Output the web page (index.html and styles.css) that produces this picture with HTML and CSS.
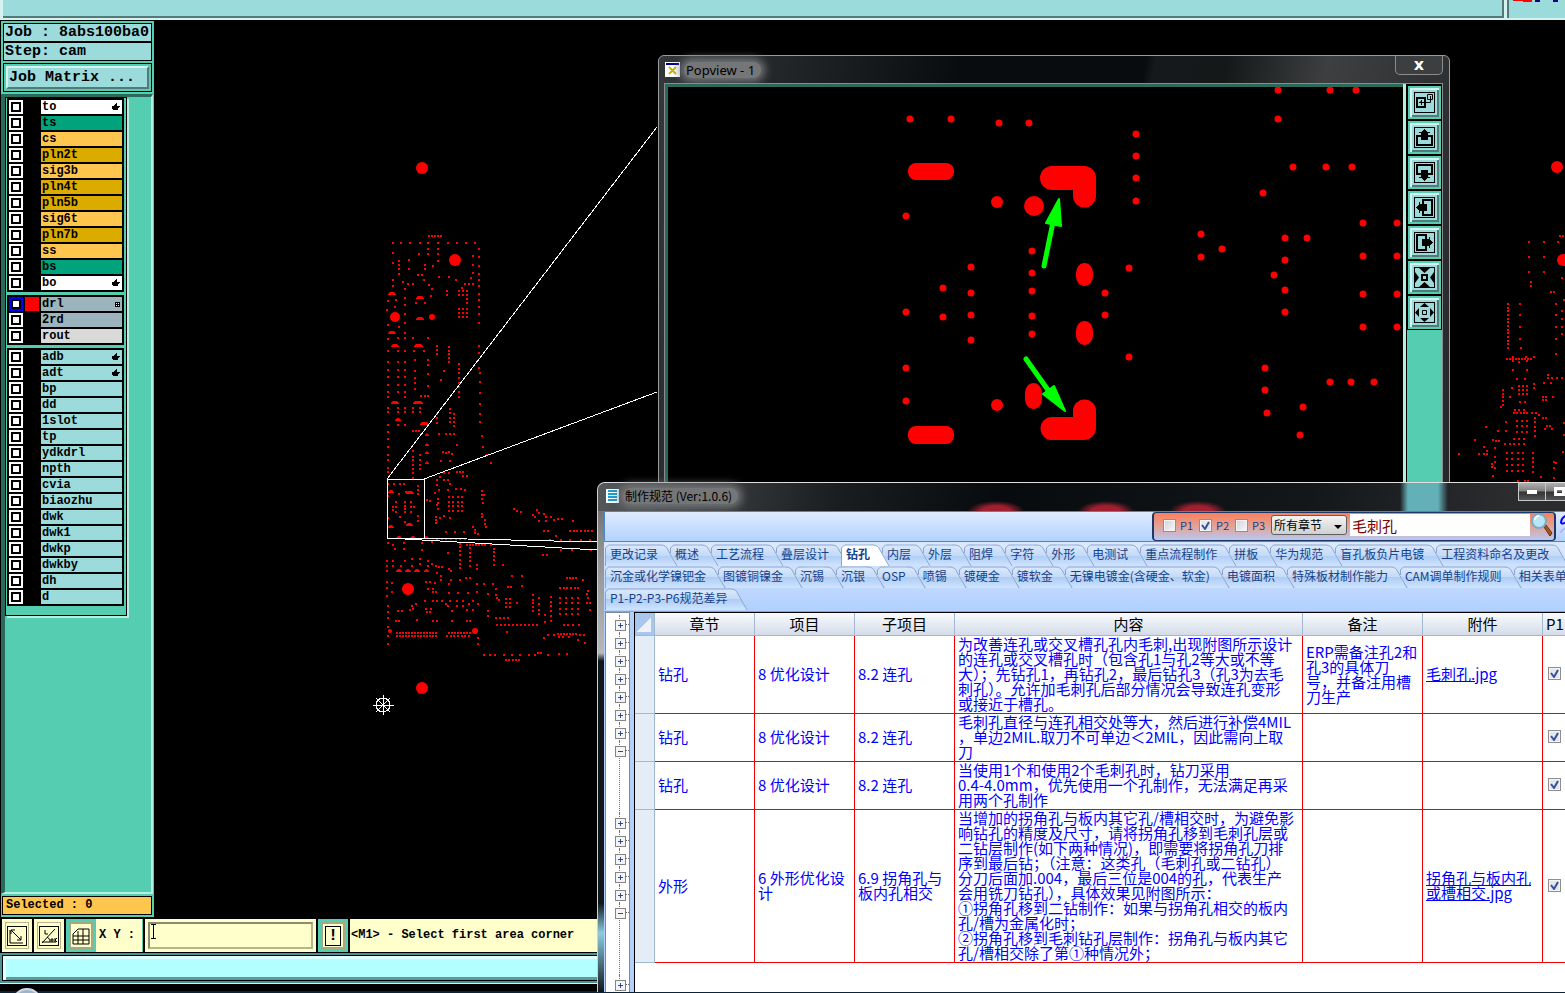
FILE: index.html
```html
<!DOCTYPE html>
<html lang="zh-CN">
<head>
  <meta charset="UTF-8" />
  <meta name="viewport" content="width=device-width, initial-scale=1.0"/>
  <title>制作规范 (Ver:1.0.6)</title>
  <link rel="stylesheet" href="styles.css">
</head>
<body>

  <!-- Shared icon shapes -->
  <svg width="0" height="0" class="defs" aria-hidden="true">
    <symbol id="frame" viewBox="0 0 21 21">
      <rect x=".5" y=".5" width="20" height="20" fill="none" stroke="#000"/>
    </symbol>
    <symbol id="pan" viewBox="0 0 21 21">
      <path d="M7 9H3v9h15V9h-4" fill="none" stroke="#000" stroke-width="2"/>
      <path d="M10 2h1v1h1v1h1v1h3v1h-2v7H7V6H5V5h3V4h1V3h1z"/>
    </symbol>
    <symbol id="hand" viewBox="0 0 8 8">
      <path d="M0 3h2V2h1V1h1V0h1v3h3v1H7v1H6v2H1V6H0z"/>
    </symbol>
    <symbol id="lens" viewBox="0 0 22 24">
      <path d="M13 14l2-2 6 8-2 3z" fill="#a8571c" stroke="#5c3010"/>
      <circle cx="8" cy="8" r="7" fill="#b9e6f7" stroke="#7fa9bd" stroke-width="2"/>
      <path d="M4 7a4 4 0 0 1 4-4" fill="none" stroke="#fff" stroke-width="2"/>
    </symbol>
  </svg>

  <header class="topbar">
    <div class="top-pane main"></div>
    <div class="top-pane logo">
      <svg width="60" height="8"><path d="M4 0h19v2H14V1H4z" fill="#f00"/><path d="M26 0h5v2h-5zM44 0h5v2h-5z" fill="#000080"/></svg>
    </div>
  </header>

  <main class="workspace">
    <aside class="sidebar">
      <div class="job-line">Job : 8abs100ba0</div>
      <div class="job-line">Step: cam</div>
      <div class="matrix"><button type="button">Job Matrix ...</button></div>
      <div class="layer-area">
        <div class="layer-panel" id="layers"></div>
      </div>
      <div class="selected">Selected : 0</div>
    </aside>
    <svg class="board" role="img" aria-label="drill layer">
      <g transform="translate(-155 -20)">
        <path id="boardDots" fill="#f00" shape-rendering="crispEdges"/>
        <g fill="#f00">
          <circle cx="422" cy="168" r="6"/><circle cx="455" cy="260" r="6"/>
          <circle cx="395" cy="317" r="5"/><circle cx="432" cy="317" r="3"/>
          <circle cx="408" cy="589" r="6"/><circle cx="422" cy="688" r="6"/>
          <circle cx="390" cy="631" r="2"/><circle cx="475" cy="631" r="3"/>
          <circle cx="1557" cy="167" r="6"/><circle cx="1563" cy="260" r="6"/>
        </g>
        <path id="boardSlots" fill="#f00"/>
        <g fill="none" stroke="#fff" shape-rendering="crispEdges">
          <path d="M387 479h37v59h-37zM387 479L657 127M424 479L657 392M387 538L597 550M424 538L597 542"/>
          <path d="M373 705h21M383 695v20M376 698l14 14M390 698l-14 14"/>
          <circle cx="383" cy="705" r="7"/>
        </g>
      </g>
    </svg>
  </main>

  <section class="statusbar">
    <button type="button" class="tool" aria-label="Zoom area">
      <svg width="20" height="20"><use href="#frame" width="20" height="20"/><path d="M3 4v13h13M4 4l10 10M4 8V4h4M14 10v4h-4" fill="none" stroke="#000"/></svg>
    </button>
    <button type="button" class="tool" aria-label="Angle">
      <svg width="20" height="20"><use href="#frame" width="20" height="20"/><path d="M3 17L16 3M3 16h14M6 4v4h3M8 11c2 1 3 3 3 5M12 13h2v2h-2zM16 12v4M18 12l-2 2 2 2" fill="none" stroke="#000"/></svg>
    </button>
    <button type="button" class="tool on" aria-label="Grid">
      <svg width="18" height="18"><path d="M1 17V7l5-5h11v15zM1 9h16M11 2v15M6 4v13M1 13h16" fill="none" stroke="#000"/></svg>
    </button>
    <label class="xy" for="xy">X Y :</label>
    <div class="xy-box"><input id="xy" type="text" autocomplete="off"/><i class="ibeam"></i></div>
    <button type="button" class="tool on alert" aria-label="Alert"><b>!</b></button>
    <p class="message">&lt;M1&gt; - Select first area corner</p>
  </section>
  <section class="msgbar"><div></div></section>
  <footer class="taskbar"><span class="orb"></span></footer>

  <!-- Popview window -->
  <section class="popview">
    <div class="pop-title">
      <svg width="15" height="15"><path d="M0 0h15v15H0z" fill="#fff"/><path d="M1 1h13v2H1z" fill="#000090"/><path d="M4 5l7 7M11 5l-7 7" stroke="#c8b800" stroke-width="2"/></svg>
      <span class="glow">Popview - 1</span>
      <button type="button" class="pop-close" aria-label="Close">x</button>
    </div>
    <div class="pop-body">
      <svg class="pop-canvas" role="img" aria-label="zoomed area">
        <g transform="translate(-668 -87)">
          <g id="popDots" fill="#f00"></g>
          <g fill="#f00">
            <rect x="908" y="163" width="46" height="17" rx="8"/>
            <rect x="908" y="426" width="46" height="18" rx="8"/>
            <path d="M1052 166h32a12 12 0 0 1 12 12v18a11 11 0 0 1-23 0v-6h-21a12 12 0 0 1 0-24z"/>
            <path d="M1052 417h21v-6a11 11 0 0 1 23 0v17a12 12 0 0 1-12 12h-32a11 11 0 0 1 0-23z"/>
            <circle cx="997" cy="202" r="6"/><circle cx="1034" cy="206" r="10"/>
            <circle cx="997" cy="405" r="6"/>
            <rect x="1025" y="383" width="17" height="26" rx="8" ry="10"/>
            <rect x="1076" y="263" width="17" height="23" rx="8" ry="10"/>
            <rect x="1076" y="321" width="17" height="24" rx="8" ry="10"/>
          </g>
          <g stroke="#0f0" fill="#0f0" stroke-linecap="round" stroke-linejoin="round">
            <path d="M1044 266l9-44M1026 359l22 31" stroke-width="5"/>
            <path d="M1059 199l-13 24 15 3zM1065 411l-22-17 11-8z" stroke-width="2"/>
          </g>
        </g>
      </svg>
      <div class="pop-tools">
        <button type="button" aria-label="Area"><svg width="21" height="21"><use href="#frame"/><path d="M3 6h8v9H3z" fill="none" stroke="#000" stroke-width="2"/><path d="M13.500 2.500h5v5h-5zM16.500 4v6.500H5M7.500 8v5M6 10h1" fill="none" stroke="#000"/></svg></button>
        <button type="button" aria-label="Up"><svg width="21" height="21"><use href="#frame"/><use href="#pan"/></svg></button>
        <button type="button" aria-label="Down"><svg width="21" height="21"><use href="#frame"/><use href="#pan" transform="rotate(180 10.500 10.500)"/></svg></button>
        <button type="button" aria-label="Left"><svg width="21" height="21"><use href="#frame"/><use href="#pan" transform="rotate(-90 10.500 10.500)"/></svg></button>
        <button type="button" aria-label="Right"><svg width="21" height="21"><use href="#frame"/><use href="#pan" transform="rotate(90 10.500 10.500)"/></svg></button>
        <button type="button" aria-label="Zoom in"><svg width="21" height="21"><use href="#frame"/><path d="M8 8h5v5H8z" fill="none" stroke="#000" stroke-width="2"/><path d="M5 1h11l-5.500 5zM5 20h11l-5.500-5zM1 5v11l4-5.500zM20 5v11l-4-5.500z"/></svg></button>
        <button type="button" aria-label="Zoom out"><svg width="21" height="21"><use href="#frame"/><path d="M8.500 8.500h4v4h-4z" fill="none" stroke="#000"/><path d="M6 5h9l-4.500-4zM6 16h9l-4.500 4zM5 6v9l-4-4.500zM16 6v9l4-4.500z"/></svg></button>
      </div>
    </div>
  </section>

  <!-- Specification window -->
  <section class="spec">
    <div class="spec-title">
      <svg width="13" height="14"><path d="M0 0h13v14H0z" fill="#fff"/><path d="M2 2h9M2 5h9M2 8h9M2 11h9" stroke="#1c9fd0" stroke-width="2"/></svg>
      <span class="glow">制作规范 (Ver:1.0.6)</span>
      <div class="win-btns">
        <button type="button" aria-label="Minimize"><i class="min"></i></button>
        <button type="button" aria-label="Maximize"><i class="max"></i></button>
        <button type="button" class="close" aria-label="Close"></button>
      </div>
    </div>
    <div class="spec-body">
      <div class="toolbar">
        <form class="search">
          <label><input type="checkbox"/>P1</label>
          <label><input type="checkbox" checked/>P2</label>
          <label><input type="checkbox"/>P3</label>
          <select aria-label="章节"><option>所有章节</option></select>
          <input type="text" class="keyword" aria-label="关键字" value="毛刺孔" autofocus/>
          <button type="button" aria-label="搜索"><svg width="22" height="24"><use href="#lens"/></svg></button>
        </form>
        <div class="extra"><svg width="20" height="26"><path d="M10 3C6 4 3 7 3 10s4 1 7-1" fill="none" stroke="#00f" stroke-width="2"/><path d="M10 17c-4-1-7 1-7 4" fill="none" stroke="#aab8ff" stroke-width="2"/></svg></div>
      </div>

      <nav class="tabs">
        <div>
          <button>更改记录</button><button>概述</button><button>工艺流程</button><button>叠层设计</button><button class="active">钻孔</button><button>内层</button><button>外层</button><button>阻焊</button><button>字符</button><button>外形</button><button>电测试</button><button>重点流程制作</button><button>拼板</button><button>华为规范</button><button>盲孔板负片电镀</button><button>工程资料命名及更改</button>
        </div>
        <div>
          <button>沉金或化学镍钯金</button><button>图镀铜镍金</button><button>沉锡</button><button>沉银</button><button>OSP</button><button>喷锡</button><button>镀硬金</button><button>镀软金</button><button>无镍电镀金(含硬金、软金)</button><button>电镀面积</button><button>特殊板材制作能力</button><button>CAM调单制作规则</button><button>相关表单记录</button>
        </div>
        <div>
          <button>P1-P2-P3-P6规范差异</button>
        </div>
      </nav>

      <div class="content">
        <ul class="tree">
          <li></li><li></li><li></li><li></li><li></li><li></li><li></li><li class="open"></li>
          <li></li><li></li><li></li><li></li><li></li><li class="open"></li><li></li>
        </ul>
        <div class="grid-wrap">
          <table>
            <colgroup>
              <col class="c-head"><col class="c-mid"><col class="c-mid"><col class="c-mid"><col>
              <col class="c-note"><col class="c-note"><col class="c-p"><col class="c-p"><col class="c-p">
            </colgroup>
            <thead>
              <tr><th class="corner"><i></i></th><th>章节</th><th>项目</th><th>子项目</th><th>内容</th><th>备注</th><th>附件</th><th>P1</th><th>P2</th><th>P3</th></tr>
            </thead>
            <tbody>
              <tr>
                <th></th><td>钻孔</td><td>8 优化设计</td><td>8.2 连孔</td>
                <td>为改善连孔或交叉槽孔孔内毛刺,出现附图所示设计<br>的连孔或交叉槽孔时（包含孔1与孔2等大或不等<br>大）；先钻孔1，再钻孔2，最后钻孔3（孔3为去毛<br>刺孔）。允许加毛刺孔后部分情况会导致连孔变形<br>或接近于槽孔。</td>
                <td>ERP需备注孔2和<br>孔3的具体刀<br>号，并备注用槽<br>刀生产</td>
                <td><a href="#">毛刺孔.jpg</a></td>
                <td><input type="checkbox" checked aria-label="P1"/></td><td></td><td></td>
              </tr>
              <tr>
                <th></th><td>钻孔</td><td>8 优化设计</td><td>8.2 连孔</td>
                <td>毛刺孔直径与连孔相交处等大，然后进行补偿4MIL<br>，单边2MIL.取刀不可单边＜2MIL，因此需向上取<br>刀</td>
                <td></td><td></td>
                <td><input type="checkbox" checked aria-label="P1"/></td><td></td><td></td>
              </tr>
              <tr>
                <th></th><td>钻孔</td><td>8 优化设计</td><td>8.2 连孔</td>
                <td>当使用1个和使用2个毛刺孔时，钻刀采用<br>0.4-4.0mm，优先使用一个孔制作，无法满足再采<br>用两个孔制作</td>
                <td></td><td></td>
                <td><input type="checkbox" checked aria-label="P1"/></td><td></td><td></td>
              </tr>
              <tr>
                <th></th><td>外形</td><td>6 外形优化设<br>计</td><td>6.9 拐角孔与<br>板内孔相交</td>
                <td>当增加的拐角孔与板内其它孔/槽相交时，为避免影<br>响钻孔的精度及尺寸，请将拐角孔移到毛刺孔层或<br>二钻层制作(如下两种情况)，即需要将拐角孔刀排<br>序到最后钻；（注意：这类孔（毛刺孔或二钻孔）<br>分刀后面加.004，最后三位是004的孔，代表生产<br>会用铣刀钻孔），具体效果见附图所示：<br>①拐角孔移到二钻制作：如果与拐角孔相交的板内<br>孔/槽为金属化时；<br>②拐角孔移到毛刺钻孔层制作：拐角孔与板内其它<br>孔/槽相交除了第①种情况外；</td>
                <td></td>
                <td><a href="#">拐角孔与板内孔<br>或槽相交.jpg</a></td>
                <td><input type="checkbox" checked aria-label="P1"/></td><td></td><td></td>
              </tr>
            </tbody>
          </table>
        </div>
      </div>
    </div>
  </section>

  <script src="board.js"></script>
</body>
</html>
```
FILE: styles.css
```css
:root {
  --teal: #54cdb0;
  --teal-dark: #2a6a5c;
  --teal-light: #b8eedf;
  --aqua: #9cdbdb;
  --cream: #ffffcc;
  --orange: #ffc64f;
  --line-blue: #a0b8d0;
  --tab-text: #15428b;
  --mono: "Liberation Mono", "DejaVu Sans Mono", monospace;
  --cjk: "Noto Sans CJK SC", "Noto Sans", sans-serif;
}
* { box-sizing: border-box; margin: 0; padding: 0; }
body {
  height: 100vh;
  display: flex;
  flex-direction: column;
  position: relative;
  overflow: hidden;
  background: #000;
  font-family: var(--mono);
  color: #000;
}
button, input, select { font: inherit; color: inherit; }
button { cursor: pointer; }
.defs { position: absolute; }

/* Top bar */
.topbar {
  display: flex;
  height: 20px;
  flex: none;
  background: #d4f2f0;
  padding-bottom: 2px;
}
.top-pane {
  background: var(--aqua);
  border-bottom: 2px solid #557878;
}
.top-pane.main {
  flex: 1;
  margin-left: 3px;
  border-right: 2px solid #557878;
}
.top-pane.logo {
  width: 58px;
  margin-left: 3px;
  border-left: 2px solid #557878;
  border-bottom: 0;
}
.top-pane svg { display: block; }

/* Workspace */
.workspace {
  flex: 1;
  min-height: 0;
  display: flex;
}
.board {
  flex: 1;
  height: 100%;
}
.sidebar {
  width: 154px;
  margin: 1px 1px 2px 0;
  padding: 2px 2px 2px 3px;
  border-left: 1px solid #000;
  background: var(--teal);
  display: flex;
  flex-direction: column;
  font-weight: bold;
}
.job-line {
  height: 19px;
  line-height: 18px;
  padding-left: 1px;
  margin-left: -1px;
  border: 1px solid #000;
  background: var(--aqua);
  font-size: 15px;
  white-space: nowrap;
}
.matrix {
  margin: 2px 0 2px -1px;
  padding: 2px;
  border: 1px solid #000;
}
.matrix button {
  display: block;
  width: 100%;
  height: 23px;
  padding-left: 1px;
  text-align: left;
  background: var(--aqua);
  border: 2px solid;
  border-color: #d4f2f0 #557878 #557878 #d4f2f0;
  font-size: 15px;
  line-height: 18px;
}
.layer-area {
  flex: 1;
  margin: 0 -1px 2px -3px;
  border: solid;
  border-width: 3px 2px 2px 4px;
  border-color: var(--teal-dark) var(--teal-light) var(--teal-light) var(--teal-dark);
}
.layer-panel {
  width: 122px;
  padding: 0 2px 9px 1px;
  border: 1px solid #000;
  box-shadow: 2px 2px 0 var(--teal-light);
  display: flex;
  flex-direction: column;
  gap: 3px;
}
.layer-group {
  background: #000;
  padding: 2px;
  display: flex;
  flex-direction: column;
  gap: 2px;
}
.layer {
  display: flex;
  gap: 2px;
  height: 14px;
}
.layer input {
  appearance: none;
  width: 14px;
  height: 14px;
  background: #fff;
  border: 2px solid #fff;
  box-shadow: inset 0 0 0 2px #000;
}
.layer input:checked { border-color: #00f; }
.layer .swatch { width: 14px; }
.layer .swatch.red { background: #f00; }
.layer label {
  flex: 1;
  display: flex;
  justify-content: space-between;
  align-items: center;
  padding: 0 2px 0 1px;
  font-size: 12px;
  line-height: 14px;
}
.layer label svg { flex: none; }
.white { background: #fff; }
.green { background: #00a37c; }
.amber { background: var(--orange); }
.gold { background: #dcab00; }
.slate { background: #9bb4be; }
.silver { background: #d9d9d9; }
.aqua { background: var(--aqua); }
.selected {
  height: 19px;
  margin-left: -2px;
  padding-left: 3px;
  border: 1px solid #000;
  background: var(--orange);
  font-size: 12px;
  line-height: 16px;
}

/* Status bar */
.statusbar {
  flex: none;
  height: 33px;
  display: flex;
  gap: 2px;
  padding-left: 2px;
  margin-bottom: 1px;
  font-size: 12px;
  font-weight: bold;
}
.tool {
  width: 30px;
  display: flex;
  align-items: center;
  justify-content: center;
  background: var(--cream);
  border: 2px solid var(--cream);
  outline: 1px solid #b4b490;
  outline-offset: -4px;
}
.tool.on {
  border: 3px solid var(--teal);
  outline: 2px solid #a8a880;
  outline-offset: -5px;
}
.alert b {
  width: 16px;
  border: 1px solid #000;
  font-size: 16px;
  line-height: 18px;
}
.xy {
  width: 47px;
  padding-left: 3px;
  line-height: 32px;
  background: var(--cream);
  border-right: 1px solid var(--teal);
  margin-left: -2px;
}
.xy-box {
  width: 171px;
  padding: 3px;
  background: var(--cream);
  position: relative;
}
.xy-box input {
  width: 100%;
  height: 100%;
  background: var(--cream);
  border: 2px solid;
  border-color: #8c8c70 #b4b490 #b4b490 #8c8c70;
}
.ibeam {
  position: absolute;
  left: 6px;
  top: 5px;
  width: 5px;
  height: 15px;
  border: solid #000;
  border-width: 1px 0;
  background: linear-gradient(#000, #000) center / 1px 100% no-repeat;
}
.message {
  flex: 1;
  padding-left: 1px;
  line-height: 32px;
  background: var(--cream);
}
.msgbar {
  flex: none;
  height: 31px;
  padding: 2px;
  background: #4f9494;
  border-bottom: 1px solid #d4f2f0;
}
.msgbar div {
  height: 26px;
  background: #b3ffff;
  border: 1px solid #000;
  box-shadow: inset 3px 3px 0 #e0ffff, inset -3px -3px 0 #5f9a9a;
}
.taskbar {
  flex: none;
  height: 9px;
  overflow: hidden;
  background: linear-gradient(#000 7px, #0c2236 7px);
}
.orb {
  display: block;
  width: 30px;
  height: 30px;
  margin: 4px 0 0 12px;
  border-radius: 50%;
  background: #9fb4c8;
  border: 2px solid #d0dce8;
}

/* Popview window */
.popview {
  position: absolute;
  left: 658px;
  top: 55px;
  width: 792px;
  height: 480px;
  padding: 0 6px 0 5px;
  border: 1px solid #9a9a9a;
  border-radius: 6px;
  background: linear-gradient(100deg, #34383a, #080c0f 300px, #080c0f 480px, #15191b 490px, #151819 560px, #3d3f41 660px, #242729);
  display: flex;
  flex-direction: column;
}
.pop-title {
  height: 27px;
  padding-left: 1px;
  display: flex;
  align-items: center;
  gap: 4px;
  font-family: "Noto Sans", sans-serif;
  font-size: 13px;
}
.glow {
  padding: 0 6px 0 2px;
  border-radius: 10px;
  line-height: 16px;
  background: #747678;
  box-shadow: 0 0 8px 4px #747678;
}
.pop-close {
  align-self: flex-start;
  width: 48px;
  height: 19px;
  margin-left: auto;
  border: 1px solid #8a8c8e;
  border-top: 0;
  border-radius: 0 0 5px 5px;
  background: #3c3e40;
  color: #fff;
  font: bold 16px/14px "DejaVu Sans", sans-serif;
}
.pop-body {
  flex: 1;
  display: flex;
  border: 1px solid #8a8c8e;
  border-bottom: 0;
  background: #000;
  overflow: hidden;
}
.pop-canvas {
  flex: 1;
  height: 100%;
  border: solid var(--teal-dark);
  border-width: 3px 0 0 3px;
}
.pop-tools {
  width: 39px;
  padding: 2px 3px 0 1px;
  border-left: 3px solid var(--teal-light);
  background: linear-gradient(#000 246px, var(--teal) 246px) 1px 0 / 35px 100% no-repeat;
  display: flex;
  flex-direction: column;
  gap: 2px;
}
.pop-tools button {
  width: 33px;
  height: 33px;
  margin-left: 1px;
  padding: 2px;
  display: grid;
  place-items: center;
  border: 2px solid var(--teal);
  background: var(--aqua);
  box-shadow: inset 2px 2px 0 #d4f2f0, inset -2px -2px 0 #557878;
}

/* Specification window */
.spec {
  position: absolute;
  left: 597px;
  right: -60px;
  top: 482px;
  bottom: 1px;
  padding: 0 7px 0 6px;
  border-top: 1px solid #e0e0e0;
  border-left: 1px solid #d0d0d0;
  border-radius: 8px 0 0 0;
  background: linear-gradient(#5c5e60, #8a8c8e 60px, #b8b8b8 170px, #10161c 178px, #10161c 420px, #8ccde0 450px, #10161c);
  display: flex;
  flex-direction: column;
}
.spec-title {
  height: 28px;
  margin: 0 -6px;
  padding: 0 0 2px 8px;
  display: flex;
  align-items: center;
  gap: 4px;
  border-radius: 8px 0 0 0;
  background:
    radial-gradient(ellipse 28px 10px at 398px 28px, #a02030 50%, transparent),
    radial-gradient(ellipse 28px 10px at 508px 28px, #a02030 50%, transparent),
    radial-gradient(ellipse 28px 10px at 600px 28px, #a02030 50%, transparent),
    linear-gradient(90deg, transparent 802px, #64b0b8 810px, #64b0b8 840px, transparent 850px),
    linear-gradient(100deg, #55585a, #1a1d20 240px, #080b0e 400px, #14171a 700px, #2a2c2e 900px);
  font-family: var(--cjk);
  font-size: 12px;
}
.win-btns {
  align-self: flex-start;
  margin-left: auto;
  display: flex;
  height: 18px;
}
.win-btns button {
  width: 28px;
  display: grid;
  place-items: center;
  border: 1px solid #c8c8c8;
  border-top: 0;
  margin-left: -1px;
  background: linear-gradient(#b0b0b0, #808080 8px, #333 9px, #555);
}
.win-btns .close { width: 52px; }
.win-btns .min { width: 10px; height: 4px; background: #fff; }
.win-btns .max { width: 11px; height: 9px; border: 3px solid #fff; }
.spec-body {
  flex: 1;
  min-height: 0;
  display: flex;
  flex-direction: column;
  background: #b5d1fb;
}
.toolbar {
  height: 31px;
  flex: none;
  display: flex;
  justify-content: flex-end;
  border: 1px solid #4f84c8;
  background: linear-gradient(#dfebfd, #b4d2ff);
}
.search {
  display: flex;
  align-items: center;
  padding: 0 1px 3px 9px;
  border: solid #1a3868;
  border-width: 1px 2px;
  border-radius: 4px;
  background: linear-gradient(#fb7f5c, #e0a49a 14px, #b8c8f0);
  font-family: var(--cjk);
}
.search label {
  display: flex;
  align-items: center;
  gap: 4px;
  width: 36px;
  font-size: 11px;
  color: var(--tab-text);
}
input[type="checkbox"]:not(.lay) {
  appearance: none;
  flex: none;
  width: 13px;
  height: 13px;
  border: 1px solid #8e8f8f;
  background: linear-gradient(135deg, #cdd3da, #f8f8f8);
  box-shadow: inset 0 0 0 1px #f4f4f4;
}
input[type="checkbox"]:not(.lay):checked {
  background: url("data:image/svg+xml,%3Csvg xmlns='http://www.w3.org/2000/svg' width='11' height='11'%3E%3Cpath d='M2 5l3 4 4-7' fill='none' stroke='%2334509c' stroke-width='2'/%3E%3C/svg%3E") #e4e8ee;
}
.search select {
  width: 76px;
  height: 20px;
  appearance: none;
  padding-left: 2px;
  border: 1px solid #606060;
  border-radius: 3px;
  background: url("data:image/svg+xml,%3Csvg xmlns='http://www.w3.org/2000/svg' width='8' height='4'%3E%3Cpath d='M0 0h8L4 4z'/%3E%3C/svg%3E") 62px 9px no-repeat, linear-gradient(#f4f4f4, #d0d0d0);
  font-size: 12px;
  line-height: 18px;
}
.keyword {
  width: 180px;
  height: 22px;
  margin: 0 1px 0 3px;
  padding-left: 2px;
  border: 0;
  outline: 0;
  background: #fff;
  color: #800000;
  font-size: 15px;
}
.search button {
  height: 24px;
  border: 0;
  background: none;
}
.extra {
  width: 61px;
  padding-left: 2px;
}

/* Tabs */
.tabs {
  flex: none;
  padding-top: 2px;
  height: 70px;
  overflow: hidden;
  background: linear-gradient(#dce9fc, #b0d0ff);
  border-bottom: 1px solid #86a4d4;
}
.tabs div {
  display: flex;
  height: 22px;
  padding-left: 1px;
}
.tabs button {
  flex: none;
  height: 22px;
  margin-right: -8px;
  padding-bottom: 3px;
  border-style: solid;
  border-width: 0 20px 0 5px;
  border-image: url("data:image/svg+xml,%3Csvg xmlns='http://www.w3.org/2000/svg' width='60' height='22'%3E%3ClinearGradient id='a' x2='0' y2='1'%3E%3Cstop stop-color='%23dbe8fb'/%3E%3Cstop offset='.5' stop-color='%23c4daf8'/%3E%3Cstop offset='.5' stop-color='%23aeccf4'/%3E%3Cstop offset='1' stop-color='%23d0e4ff'/%3E%3C/linearGradient%3E%3Cpath d='M0 9V4l3-3h40q5 0 7 5l9 16H9z' fill='url(%23a)'/%3E%3Cpath d='M.5 9V4l3-3H43q5 0 7 5l9 16' fill='none' stroke='%238ba5cf'/%3E%3C/svg%3E") 0 20 0 10 fill / 0 20px 0 10px;
  background: none;
  color: var(--tab-text);
  font-family: var(--cjk);
  font-size: 12px;
  line-height: 18px;
  white-space: nowrap;
}
.tabs button:first-child {
  border-image-source: url("data:image/svg+xml,%3Csvg xmlns='http://www.w3.org/2000/svg' width='60' height='22'%3E%3ClinearGradient id='a' x2='0' y2='1'%3E%3Cstop stop-color='%23dbe8fb'/%3E%3Cstop offset='.5' stop-color='%23c4daf8'/%3E%3Cstop offset='.5' stop-color='%23aeccf4'/%3E%3Cstop offset='1' stop-color='%23d0e4ff'/%3E%3C/linearGradient%3E%3Cpath d='M.5 22V4l3-3H43q5 0 7 5l9 16' fill='url(%23a)' stroke='%238ba5cf'/%3E%3C/svg%3E");
}
.tabs button.active {
  border-image-source: url("data:image/svg+xml,%3Csvg xmlns='http://www.w3.org/2000/svg' width='60' height='22'%3E%3Cpath d='M.5 22V4l3-3H43q5 0 7 5l9 16' fill='%23fff' stroke='%238ba5cf'/%3E%3C/svg%3E");
  font-weight: bold;
}

/* Tree and grid */
.content {
  flex: 1;
  min-height: 0;
  display: flex;
  padding-left: 1px;
}
.tree {
  width: 25px;
  margin-right: 4px;
  padding-top: 2px;
  border: 1px solid #808898;
  border-bottom: 0;
  background: #fff;
  list-style: none;
  overflow: hidden;
}
.tree li {
  height: 18px;
  margin-left: 13px;
  position: relative;
  border-left: 1px dotted #707070;
}
.tree li.open { height: 72px; }
.tree li::after {
  content: "";
  position: absolute;
  left: 5px;
  top: 9px;
  width: 4px;
  border-top: 1px dotted #707070;
}
.tree li::before {
  content: "";
  position: absolute;
  left: -5px;
  top: 5px;
  width: 9px;
  height: 9px;
  border: 1px solid #848484;
  background:
    linear-gradient(#2a4a9c, #2a4a9c) center / 5px 1px no-repeat,
    linear-gradient(#2a4a9c, #2a4a9c) center / 1px 5px no-repeat,
    #f4f4f4;
}
.tree li.open::before {
  background: linear-gradient(#2a4a9c, #2a4a9c) center / 5px 1px no-repeat, #f4f4f4;
}
.grid-wrap {
  flex: 1;
  border: solid #000;
  border-width: 1px 0 0 1px;
  background: #fff;
  overflow: hidden;
}
table {
  width: 100%;
  table-layout: fixed;
  border-collapse: separate;
  border-spacing: 0;
  font-family: var(--cjk);
  font-size: 15px;
  line-height: 15px;
}
.c-head { width: 20px; }
.c-mid { width: 100px; }
.c-note { width: 120px; }
.c-p { width: 25px; }
th {
  border: solid var(--line-blue);
  border-width: 0 1px 1px 0;
  background: #e4ecf7;
  font-weight: normal;
}
thead th {
  height: 23px;
  padding-bottom: 1px;
  background: linear-gradient(#f9fbfd, #d4dce9);
}
thead th.corner { background: #a9c6ee; padding: 3px 2px; }
.corner i {
  display: block;
  width: 14px;
  height: 15px;
  background: linear-gradient(135deg, #a9c6ee 50%, #eef2f6 50%);
}
td {
  padding: 0 3px 2px;
  border: solid #f00000;
  border-width: 0 1px 1px 0;
  color: #00f;
  white-space: nowrap;
}
td input { display: block; margin-left: 2px; }
a { color: #00f; }
```
FILE: board.js
```js
// Layer list: name, colour class, optional mark
const groups = [
  [["to", "white", "hand"], ["ts", "green"], ["cs", "amber"], ["pln2t", "gold"], ["sig3b", "amber"],
   ["pln4t", "gold"], ["pln5b", "gold"], ["sig6t", "amber"], ["pln7b", "gold"], ["ss", "amber"],
   ["bs", "green"], ["bo", "white", "hand"]],
  [["drl", "slate", "grid"], ["2rd", "slate"], ["rout", "silver"]],
  ["adb", "adt", "bp", "dd", "1slot", "tp", "ydkdrl", "npth", "cvia", "biaozhu",
   "dwk", "dwk1", "dwkp", "dwkby", "dh", "d"].map((n, i) => [n, "aqua", i < 2 ? "hand" : ""])
];

const marks = {
  hand: '<svg width="8" height="8"><use href="#hand"/></svg>',
  grid: '<svg width="5" height="5" shape-rendering="crispEdges"><path d="M0 0h5v5H0z"/><path d="M1 1h1v1H1zM3 1h1v1H3zM1 3h1v1H1zM3 3h1v1H3z" fill="#fff"/></svg>'
};

document.getElementById("layers").innerHTML = groups.map(g =>
  '<div class="layer-group">' + g.map(([name, color, mark]) => {
    const on = name === "drl";
    return `<div class="layer"><input class="lay" type="checkbox" id="l-${name}"${on ? " checked" : ""}>` +
      `<span class="swatch${on ? " red" : ""}"></span>` +
      `<label for="l-${name}" class="${color}">${name}${marks[mark] || ""}</label></div>`;
  }).join("") + "</div>"
).join("");

// Drill coordinates are stored three units to the pixel, from each block's own origin
function holes(ox, oy, pts) {
  let d = "";
  for (let i = 0; i < pts.length; i += 2) {
    d += `M${ox - 1 + Math.round(pts[i] / 3)} ${oy - 1 + Math.round(pts[i + 1] / 3)}h2v2h-2z`;
  }
  return d;
}

// Evenly spaced array of holes
function array(x0, y0, dx, dy, nx, ny) {
  const out = [];
  for (let j = 0; j < ny; j++) {
    for (let i = 0; i < nx; i++) out.push(x0 + i * dx, y0 + j * dy);
  }
  return out;
}

const upper = [
  ...array(177, 48, 9, 0, 5, 1),
  69,69, 93,69, 120,69, 150,69, 174,69, 204,69, 234,69, 261,69, 288,69, 315,69,
  69,99, 69,129, 69,180, 69,198, 174,87, 174,102, 204,87, 204,102, 204,123, 147,102,
  117,120, 117,147, 87,123, 87,135, 87,147, 87,162, 165,135, 165,147, 189,138, 144,165, 156,165,
  99,186, 114,192, 129,192, 162,180, 177,195, 186,207, 183,228, 207,171, 237,171, 258,180,
  309,108, 309,135, 309,159, 303,174, 285,192, 297,192, 309,192, 276,204,
  327,87, 327,111, 327,138, 327,162, 327,180, 327,198, 327,222, 327,240, 327,261, 327,282, 327,309,
  327,378, 327,399, 327,444, 330,459, 330,486, 330,519, 330,552, 330,582, 330,606, 336,648, 339,681, 351,705,
  231,213, 231,225, ...array(267, 213, 12, 12, 3, 2), 291,237, 291,249, ...array(267, 267, 12, 12, 3, 3),
  105,207, 105,234, 105,255, 105,282, 105,309, 105,339, 138,249, 165,249,
  54,243, 78,240, 75,261, 51,270, 54,315, 87,321, 54,357, 84,354, 105,354, 129,354, 174,354,
  54,393, 84,393, 105,393, 132,393, 162,393, 201,378, 201,390, 201,402,
  ...array(237, 381, 0, 11, 1, 5), ...array(267, 432, 0, 14, 1, 8),
  54,426, 54,450, 54,471, 54,495, 54,516, 54,531, 84,426, 84,450, 84,471, 84,495, 84,516,
  105,426, 105,450, 105,471, 105,495, 105,516, 105,531, 135,420, 135,453, 135,475, 135,489, 135,507,
  174,420, 174,435, 174,462, 174,498, 174,528, 165,528, 153,528, 222,453, 213,480,
  54,564, 54,576, 84,564, 84,576, 105,564, 105,576, 129,564, 129,576, 150,564, 150,576,
  54,615, 84,615, 105,615, 129,633, 138,633, 147,633, 54,636, 54,657, 54,681, 54,705,
  201,582, 201,594, 201,609, 240,567, 240,579, 240,594, 240,606, 252,582, 252,594, 252,606, 252,618,
  207,642, 228,642, 240,642, 252,642, 261,675, 219,696, 228,699, 237,696, 246,702,
  129,693, 129,711, 150,705
];

const lower = [
  54,60, 54,84, 54,96, 129,60, 129,75, 129,87, 129,99, 129,114, 150,60, 150,75, 150,87,
  213,63, 240,63, 363,69, 351,45, 222,99, 237,99, 261,96, 270,96, 279,96, 279,108, 291,108, 210,111,
  201,120, 201,135, 222,120, 234,120, 240,132, 207,150, 234,150, 258,147, 273,147, 285,150, 195,159,
  54,132, 72,132, 90,132, 102,132, 54,168, 87,162, 144,138, 144,150, 144,162, 108,156,
  69,201, 69,210, 78,186, 78,201, 78,216, 105,186, 105,198, 105,207, 105,216, 123,186, 123,201, 123,216,
  132,201, 90,231, 54,234, 144,228, 144,243, 105,246, 171,180, 180,183, 204,177, 204,189, 201,195, 204,207,
  ...array(237, 171, 13, 14, 4, 4), 336,153, 336,165, 342,165, 336,177, 339,189, 336,222, 336,231, 345,240, 345,252, 348,261,
  198,231, 198,240, 198,249, 210,234, 222,228, 240,234, 309,261, 315,270, 315,279, 324,282, 255,276, 282,276, 228,276,
  432,207, 441,213, 453,216, 489,225, 501,210, 507,219, 495,231, 507,243, 522,222, 528,231, 528,243, 543,231, 552,240, 564,237, 576,237, 609,243,
  522,273, 534,273, 558,288, ...array(600, 273, 11, 0, 7, 1), 540,300, 573,300, 600,300, 633,300, 660,300,
  54,309, 69,315, 102,309, 75,327, 102,327, 156,309, 156,330, 187,306, ...array(201, 296, 14, 0, 7, 1),
  270,312, 270,321, 270,333, 270,345, 270,360, 270,372, 270,384, 234,339, 300,324, 300,339, 300,351, 300,363, 300,378,
  ...array(291, 315, 9, 0, 7, 1), 363,315, 372,327, 372,336, 372,348, 372,360, 372,375, 399,375, 321,375, 321,387,
  519,345, 531,345, 573,330, 606,330, 663,330,
  51,363, 51,378, 51,393, 69,363, 69,378, 93,378, 105,363, 126,357, 126,378, 150,357, 150,372, 174,363, 174,378,
  186,372, 198,378, 207,381, 216,381, 237,387, 243,393, 201,399, 213,408, 213,420, 243,420, 270,420, 288,414, 300,414,
  51,426, 51,444, 51,468, 66,429, 66,456, 168,426, 180,426, 195,429, 174,447, 189,447, 189,456, 198,456, 237,432, 237,459, 264,459,
  321,432, 342,432, 369,432, 294,459, 321,456, 354,462, 378,465, 381,474, 387,480, 378,447, 426,408, 456,408, 414,441, 423,441, 456,438,
  138,492, 165,483, 189,483, 201,483, 216,483, 228,492, 240,483, 261,483, 279,483, 297,492, 309,483, 324,492,
  54,498, 54,516, 54,534, 54,561, 54,588, 54,612, 126,498, 84,513, 96,513, 120,510, 129,507, 168,507, 183,507, 171,516, 180,516,
  234,498, 246,513, 261,498, 279,498, 291,510, 309,510, 354,513, 354,528, 78,543, 87,543, 141,540, 189,543, 201,543, 246,543, 291,543, 300,543,
  ...array(81, 579, 9, 0, 14, 1), ...array(81, 588, 9, 0, 14, 1), ...array(237, 579, 9, 0, 8, 1), ...array(231, 588, 11, 0, 7, 1),
  324,594, 324,612, 411,576, 378,534, 390,534, 402,534, 414,534, ...array(381, 555, 12, 0, 11, 1), 525,546, 543,543,
  408,477, 420,477, 408,489, 420,489, 441,489, 408,501, 420,501, 489,465, 489,480, 489,489, 489,501, 489,513,
  507,474, 507,492, 507,510, 507,522, 525,525, ...array(543, 471, 0, 14, 1, 5),
  ...array(570, 444, 11, 0, 6, 1), ...array(570, 474, 18, 16, 4, 4), 582,555, 594,555, 609,555, 627,555,
  591,414, 600,414, 609,414, 618,414, 639,420, 654,453, 651,462, 654,474, 651,489, 660,489, 660,510,
  522,594, 534,585, 552,585, ...array(564, 582, 9, 0, 7, 1), 567,591, 579,591, 597,591, 630,585, 642,585, 624,600, 645,609,
  342,645, 360,645, 375,645, 402,645, 426,645, 450,645, 477,645, 495,645, 504,639, 513,639, 534,645, 567,642, 591,642,
  ...array(408, 660, 10, 0, 5, 1)
];

const right = [
  402,726, 447,726, 489,726, 402,771, 447,771, 402,816, 447,816, 495,708, 504,708, 408,846, 408,858, 501,834,
  468,876, 477,876, ...array(339, 912, 0, 11, 1, 13), 375,912, 375,945, 375,981, 375,1017, 378,1044,
  483,912, 483,945, 483,981, 483,1017, 483,1062, 507,900, 502,932, 502,956, 502,980, 502,1003,
  ...array(336, 1077, 9, 0, 9, 1), 354,1071, 354,1083, 372,1086, 393,1071, 396,1083, 417,1071, 354,1110, 396,1110,
  366,1137, 390,1137, 459,1125, 459,1134, 471,1134, 486,1134, 501,1134, 447,1149, 468,1149, 417,1152, 417,1164,
  ...array(372, 1158, 12, 12, 3, 3), 351,1164, 375,1206, 390,1206, ...array(324, 1170, 0, 11, 1, 5), 345,1191, 318,1221,
  444,1191, 453,1191, 444,1200, 453,1200, 474,1191, 360,1230, 372,1230, 387,1230, ...array(357, 1239, 10, 0, 5, 1), 411,1239, 423,1239, 432,1245,
  ...array(366, 1263, 15, 16, 3, 3), 333,1266, 333,1293, 420,1254, 420,1266, 420,1281, 420,1293, 420,1308, 444,1254, 453,1254,
  450,1287, 456,1278, 465,1278, 471,1287, 507,1269, 507,1305, 273,1281, 309,1293, 240,1320, 294,1320, 303,1323, 312,1323,
  357,1317, 372,1317, 387,1317, ...array(330, 1332, 14, 0, 5, 1), 267,1341, 300,1344, 276,1353, 192,1362, 252,1362, 267,1362, 276,1362,
  ...array(336, 1359, 16, 18, 4, 4), ...array(414, 1359, 0, 14, 1, 5), 300,1371, 300,1386, 291,1392, 291,1401, 300,1404, 294,1428,
  477,1386, 483,1389, 477,1404, 504,1356, 438,1431, 477,1434, 369,1442, 390,1442, 400,1442
];

document.getElementById("boardDots").setAttribute("d",
  holes(370, 220, upper) + holes(370, 440, lower) + holes(1395, 0, right));

// Short slots seen as flat-topped pads
const slots = [
  [388, 292, 8], [416, 296, 8], [416, 317, 8], [388, 331, 8], [391, 344, 8], [414, 344, 9],
  [391, 401, 8], [413, 401, 10], [395, 418, 6], [420, 422, 9], [425, 433, 4], [425, 443, 4], [425, 451, 4],
  [425, 461, 4], [388, 490, 6], [406, 491, 8], [406, 523, 7], [388, 525, 6], [396, 536, 6], [410, 536, 6],
  [424, 536, 5], [396, 569, 6], [405, 569, 6], [414, 569, 6], [424, 569, 5]
];
document.getElementById("boardSlots").setAttribute("d",
  slots.map(([x, y, w]) => `M${x} ${y + 2}l2-2h${w - 4}l2 2v1h-${w}z`).join(""));

// Popview holes
const pop = [
  910,119, 951,119, 999,123, 1029,123, 906,216, 1032,251, 1032,273, 1032,291, 1032,316, 1032,334,
  971,267, 971,293, 971,315, 971,340, 943,288, 943,317, 906,312, 906,368, 906,401,
  1136,134, 1136,156, 1136,178, 1136,201, 1278,90, 1330,90, 1356,90, 1278,119,
  1293,167, 1326,167, 1352,167, 1263,193, 1201,234, 1201,257, 1222,249, 1129,268, 1105,293, 1105,315, 1129,357,
  1363,223, 1397,223, 1363,256, 1397,256, 1363,294, 1397,294, 1363,327, 1397,327,
  1285,238, 1307,238, 1285,260, 1274,275, 1285,290, 1285,312,
  1265,368, 1265,390, 1267,413, 1330,382, 1351,382, 1374,382, 1303,407, 1300,435
];
let circles = "";
for (let i = 0; i < pop.length; i += 2) {
  circles += `<circle cx="${pop[i]}" cy="${pop[i + 1]}" r="3.5"/>`;
}
document.getElementById("popDots").innerHTML = circles;
```
